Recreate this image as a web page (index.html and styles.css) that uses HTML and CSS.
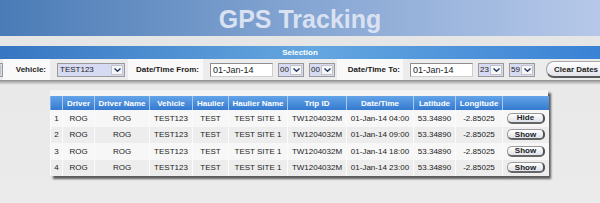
FILE: index.html
```html
<!DOCTYPE html>
<html lang="en">
<head>
<meta charset="utf-8">
<title>GPS Tracking</title>
<link rel="stylesheet" href="styles.css">
</head>
<body>
<header class="banner"><h1>GPS Tracking</h1></header>
<div class="strip"></div>
<section class="selection">
  <div class="sel-title">Selection</div>
  <div class="sel-row">
    <div class="sel sel-partial"><span class="sel-val"></span><span class="sel-arrow"><svg viewBox="0 0 7 4" width="7" height="4"><polyline points="0.5,0.5 3.5,3.3 6.5,0.5"/></svg></span></div>
    <div class="lbl lbl-veh">Vehicle:</div>
    <div class="sel sel-wide"><span class="sel-val">TEST123</span><span class="sel-arrow"><svg viewBox="0 0 7 4" width="7" height="4"><polyline points="0.5,0.5 3.5,3.3 6.5,0.5"/></svg></span></div>
    <div class="lbl lbl-from">Date/Time From:</div>
    <div class="inp">01-Jan-14</div>
    <div class="sel sel-small sel-first"><span class="sel-val">00</span><span class="sel-arrow"><svg viewBox="0 0 7 4" width="7" height="4"><polyline points="0.5,0.5 3.5,3.3 6.5,0.5"/></svg></span></div>
    <div class="sel sel-small"><span class="sel-val">00</span><span class="sel-arrow"><svg viewBox="0 0 7 4" width="7" height="4"><polyline points="0.5,0.5 3.5,3.3 6.5,0.5"/></svg></span></div>
    <div class="lbl lbl-to">Date/Time To:</div>
    <div class="inp">01-Jan-14</div>
    <div class="sel sel-small sel-first"><span class="sel-val">23</span><span class="sel-arrow"><svg viewBox="0 0 7 4" width="7" height="4"><polyline points="0.5,0.5 3.5,3.3 6.5,0.5"/></svg></span></div>
    <div class="sel sel-small"><span class="sel-val">59</span><span class="sel-arrow"><svg viewBox="0 0 7 4" width="7" height="4"><polyline points="0.5,0.5 3.5,3.3 6.5,0.5"/></svg></span></div>
    <button class="clear">Clear Dates</button>
  </div>
</section>
<main class="content">
  <div class="card">
    <table class="grid">
      <colgroup>
        <col style="width:12px"><col style="width:32px"><col style="width:55px"><col style="width:43px"><col style="width:36px"><col style="width:59px"><col style="width:59px"><col style="width:67px"><col style="width:42px"><col style="width:47px"><col style="width:46px">
      </colgroup>
      <thead>
        <tr><th></th><th>Driver</th><th>Driver Name</th><th>Vehicle</th><th>Haulier</th><th>Haulier Name</th><th>Trip ID</th><th>Date/Time</th><th>Latitude</th><th>Longitude</th><th></th></tr>
      </thead>
      <tbody>
        <tr><td>1</td><td>ROG</td><td>ROG</td><td>TEST123</td><td>TEST</td><td>TEST SITE 1</td><td>TW1204032M</td><td>01-Jan-14 04:00</td><td>53.34890</td><td>-2.85025</td><td><button class="rowbtn">Hide</button></td></tr>
        <tr><td>2</td><td>ROG</td><td>ROG</td><td>TEST123</td><td>TEST</td><td>TEST SITE 1</td><td>TW1204032M</td><td>01-Jan-14 09:00</td><td>53.34890</td><td>-2.85025</td><td><button class="rowbtn">Show</button></td></tr>
        <tr><td>3</td><td>ROG</td><td>ROG</td><td>TEST123</td><td>TEST</td><td>TEST SITE 1</td><td>TW1204032M</td><td>01-Jan-14 18:00</td><td>53.34890</td><td>-2.85025</td><td><button class="rowbtn">Show</button></td></tr>
        <tr><td>4</td><td>ROG</td><td>ROG</td><td>TEST123</td><td>TEST</td><td>TEST SITE 1</td><td>TW1204032M</td><td>01-Jan-14 23:00</td><td>53.34890</td><td>-2.85025</td><td><button class="rowbtn">Show</button></td></tr>
      </tbody>
    </table>
  </div>
</main>
</body>
</html>
```
FILE: styles.css
```css
html, body {
  margin: 0;
  padding: 0;
}
body {
  width: 600px;
  height: 203px;
  overflow: hidden;
  background: #ebebeb;
  font-family: "Liberation Sans", Arial, sans-serif;
  font-size: 8px;
  color: #1c1c1c;
}
.banner {
  height: 36px;
  box-sizing: border-box;
  padding-top: 5px;
  overflow: hidden;
  background: linear-gradient(to right, #4a7bb6 0%, #84a5d2 50%, #b6c8e9 100%);
}
.banner h1 {
  margin: 0;
  text-align: center;
  font-size: 25px;
  line-height: 28px;
  font-weight: bold;
  color: #dae2f2;
}
.strip {
  height: 10px;
  background: #e6e6e6;
}
.sel-title {
  height: 13px;
  line-height: 13px;
  text-align: center;
  color: #ffffff;
  font-weight: bold;
  background: linear-gradient(to right, #3676c2 0%, #64a6e0 52%, #3a82d5 100%);
}
.sel-row {
  display: flex;
  align-items: center;
  height: 21px;
  background: #ececec;
  overflow: hidden;
  white-space: nowrap;
}
.lbl {
  flex-shrink: 0;
  align-self: stretch;
  display: flex;
  align-items: center;
  justify-content: flex-end;
  box-sizing: border-box;
  background: #f9f9f9;
  font-weight: bold;
  padding-right: 4px;
}
.lbl-veh { width: 47px; }
.lbl-from { width: 75px; margin-left: 3px; }
.lbl-to { width: 66px; margin-left: 2px; padding-right: 3px; }
.sel {
  flex-shrink: 0;
  display: flex;
  box-sizing: border-box;
  height: 14px;
  border: 1px solid #9a9a9a;
  background: #d6daf2;
}
.sel-val {
  flex: 1;
  line-height: 12px;
  padding-left: 2px;
  overflow: hidden;
}
.sel-arrow {
  flex-shrink: 0;
  width: 12px;
  box-sizing: border-box;
  margin: 1px;
  border: 1px solid #c4c4c4;
  background: #f6f6f8;
  display: flex;
  align-items: center;
  justify-content: center;
}
.sel-arrow svg polyline {
  fill: none;
  stroke: #1d3560;
  stroke-width: 1.3;
}
.sel-partial { width: 20px; margin-left: -17px; }
.sel-wide { width: 68px; margin-left: 7px; }
.sel-small { width: 26px; margin-left: 5px; }
.sel-small .sel-val { padding-left: 1px; }
.inp {
  flex-shrink: 0;
  width: 63px;
  height: 14px;
  box-sizing: border-box;
  margin-left: 7px;
  border: 1px solid #8e8e8e;
  border-right-color: #cfcfcf;
  border-bottom-color: #cfcfcf;
  background: #ffffff;
  font-size: 9px;
  line-height: 12px;
  padding-left: 2px;
}
.inp + .sel-first { margin-left: 5px; }
.clear {
  flex-shrink: 0;
  margin-left: 11px;
  width: 62px;
  height: 17px;
  padding: 0 0 0 7px;
  text-align: left;
  white-space: nowrap;
  border: 1px solid #a8a8a8;
  border-right: 2px solid #4e4e4e;
  border-bottom: 2px solid #5a5a5a;
  border-radius: 8px;
  background: linear-gradient(#ffffff, #e2e4ea);
  font-family: "Liberation Sans", Arial, sans-serif;
  font-size: 8px;
  font-weight: bold;
  color: #1c1c1c;
}
.content {
  padding: 10px 0 0 50px;
  height: 118px;
  background: linear-gradient(#8a8a8a 0px, #c8c8c8 3px, #e9e9e9 5px, #ebebeb 100%);
}
.card {
  width: 498px;
  padding-top: 6px;
  background: #f4f4f4;
  box-shadow: 3px 3px 2px #5c5c5c;
}
.grid {
  width: 498px;
  table-layout: fixed;
  border-collapse: collapse;
}
.grid th, .grid td {
  padding: 0;
  text-align: center;
  white-space: nowrap;
  overflow: hidden;
}
.grid th {
  height: 14px;
  color: #ffffff;
  font-weight: bold;
  background: linear-gradient(#63a3e8, #3479cf);
  border-left: 1px solid #a9c9ef;
}
.grid th:first-child { border-left: 1px solid #7fb2ec; }
.grid td {
  height: 16.5px;
  border-left: 1px solid #fbfbfb;
}
.grid tbody tr:nth-child(odd) td { background: #f7f7f7; }
.grid tbody tr:nth-child(even) td { background: #ededed; }
.rowbtn {
  display: block;
  margin: 0 0 0 4px;
  width: 38px;
  height: 11px;
  padding: 0;
  border: 1px solid #9a9a9a;
  border-right: 2px solid #505050;
  border-bottom: 2px solid #666666;
  border-radius: 5px;
  background: linear-gradient(#ffffff, #e0e2ec);
  font-family: "Liberation Sans", Arial, sans-serif;
  font-size: 8px;
  font-weight: bold;
  line-height: 7px;
  color: #1c1c1c;
}
```
